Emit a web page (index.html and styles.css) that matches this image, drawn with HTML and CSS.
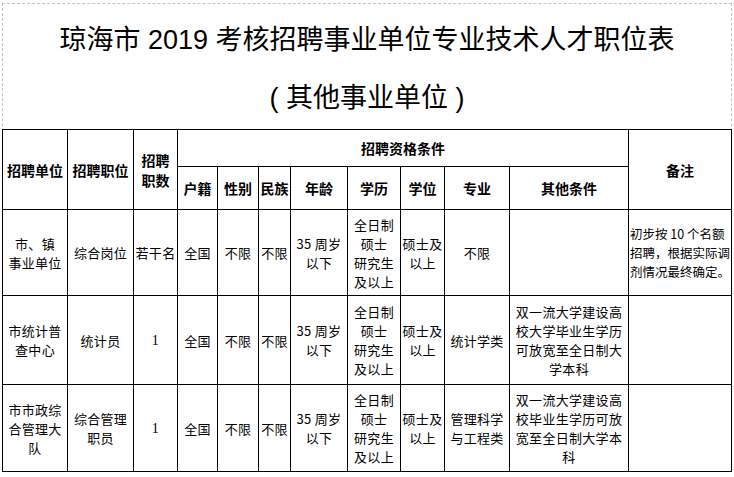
FILE: index.html
```html
<!DOCTYPE html>
<html lang="zh">
<head>
<meta charset="utf-8">
<link rel="stylesheet" href="styles.css">
</head>
<body>
<div class="page">
  <div class="heading">
    <h1 class="title">琼海市 2019 考核招聘事业单位专业技术人才职位表</h1>
    <h2 class="subtitle">( 其他事业单位 )</h2>
  </div>
  <table class="grid">
    <colgroup>
      <col class="c65"><col class="c66"><col class="c44"><col class="c40"><col class="c41"><col class="c32"><col class="c57"><col class="c53"><col class="c44"><col class="c65"><col class="c119"><col class="c103">
    </colgroup>
    <tr class="h1">
      <th rowspan="2">招聘单位</th>
      <th rowspan="2">招聘职位</th>
      <th rowspan="2">招聘<br>职数</th>
      <th colspan="8">招聘资格条件</th>
      <th rowspan="2">备注</th>
    </tr>
    <tr class="h2">
      <th>户籍</th><th>性别</th><th>民族</th><th>年龄</th><th>学历</th><th>学位</th><th>专业</th><th>其他条件</th>
    </tr>
    <tr class="r1">
      <td>市、镇<br>事业单位</td>
      <td>综合岗位</td>
      <td>若干名</td>
      <td>全国</td>
      <td>不限</td>
      <td>不限</td>
      <td>35 周岁<br>以下</td>
      <td>全日制<br>硕士<br>研究生<br>及以上</td>
      <td>硕士及<br>以上</td>
      <td>不限</td>
      <td></td>
      <td class="note">初步按 10 个名额<br>招聘，根据实际调<br>剂情况最终确定。</td>
    </tr>
    <tr class="r2">
      <td>市统计普<br>查中心</td>
      <td>统计员</td>
      <td class="num">1</td>
      <td>全国</td>
      <td>不限</td>
      <td>不限</td>
      <td>35 周岁<br>以下</td>
      <td>全日制<br>硕士<br>研究生<br>及以上</td>
      <td>硕士及<br>以上</td>
      <td>统计学类</td>
      <td>双一流大学建设高<br>校大学毕业生学历<br>可放宽至全日制大<br>学本科</td>
      <td></td>
    </tr>
    <tr class="r3">
      <td>市市政综<br>合管理大<br>队</td>
      <td>综合管理<br>职员</td>
      <td class="num">1</td>
      <td>全国</td>
      <td>不限</td>
      <td>不限</td>
      <td>35 周岁<br>以下</td>
      <td>全日制<br>硕士<br>研究生<br>及以上</td>
      <td>硕士及<br>以上</td>
      <td>管理科学<br>与工程类</td>
      <td>双一流大学建设高<br>校毕业生学历可放<br>宽至全日制大学本<br>科</td>
      <td></td>
    </tr>
  </table>
</div>
</body>
</html>
```
FILE: styles.css
```css
html, body {
  margin: 0;
  padding: 0;
  background: #ffffff;
}
body {
  font-family: "Noto Sans CJK SC", "Liberation Sans", sans-serif;
  color: #000;
}
.page {
  margin: 3px 2px 0 2px;
  width: 728px;
  border-top: 1px dashed #c4c4c4;
  border-left: 1px dashed #c4c4c4;
  border-right: 1px dashed #c4c4c4;
}
.heading {
  height: 125px;
  display: flex;
  flex-direction: column;
  align-items: center;
  padding-top: 21px;
  box-sizing: border-box;
  gap: 28px;
}
.title, .subtitle {
  margin: 0;
  font-family: "Liberation Sans", "Noto Sans CJK SC", sans-serif;
  font-weight: normal;
  font-size: 27px;
  line-height: 30px;
  white-space: nowrap;
}
.grid {
  margin-left: -1px;
  width: 730px;
  border-collapse: collapse;
  table-layout: fixed;
}
.c65 { width: 65px; }
.c66 { width: 66px; }
.c44 { width: 44px; }
.c40 { width: 40px; }
.c41 { width: 41px; }
.c32 { width: 32px; }
.c57 { width: 57px; }
.c53 { width: 53px; }
.c119 { width: 119px; }
.c103 { width: 103px; }
.grid th, .grid td {
  border: 1px solid #000;
  padding: 0 1px;
  text-align: center;
  vertical-align: middle;
  white-space: nowrap;
  overflow: hidden;
}
.grid th {
  font-size: 14px;
  font-weight: bold;
  line-height: 20px;
}
.grid td {
  font-size: 13px;
  line-height: 19px;
  letter-spacing: 0.3px;
}
.grid td.num {
  font-family: "Liberation Serif", serif;
  font-size: 14px;
}
.h1 { height: 37px; }
.h2 { height: 43px; }
.r1 { height: 86px; }
.r2 { height: 89px; }
.r3 { height: 87px; }
.grid td.note {
  text-align: left;
  font-size: 12.5px;
  letter-spacing: 0;
  padding: 0 0 0 1px;
}
```
